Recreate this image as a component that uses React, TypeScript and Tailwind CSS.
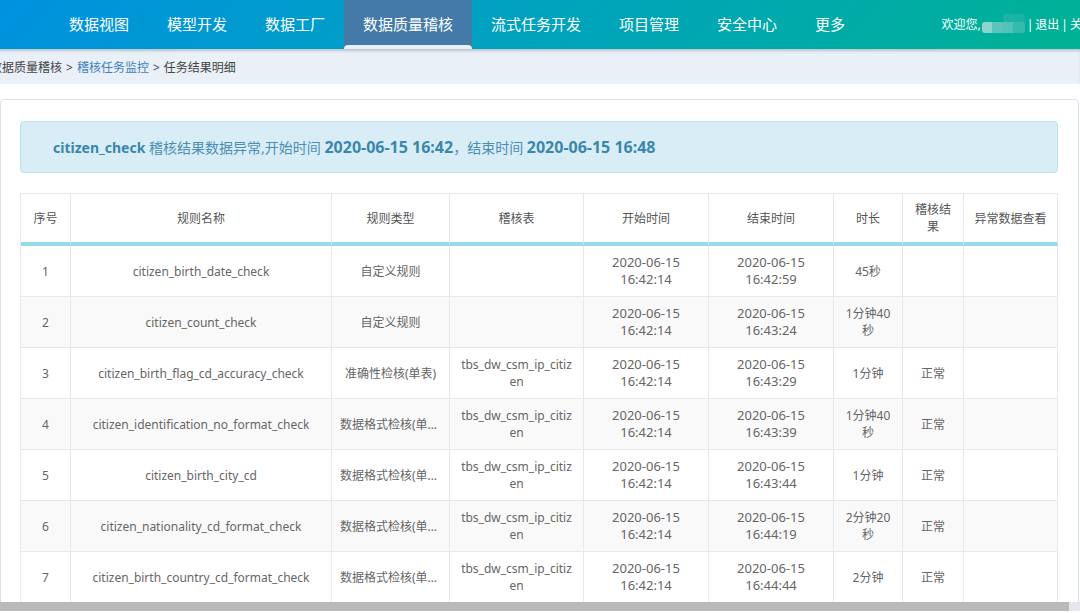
import React from 'react';
import clsx from 'clsx';

interface CheckResult {
  id: number;
  name: string;
  type: string;
  table: string;
  start: string;
  end: string;
  duration: string;
  result: string;
}

const navItems = [
  '数据视图',
  '模型开发',
  '数据工厂',
  '数据质量稽核',
  '流式任务开发',
  '项目管理',
  '安全中心',
  '更多',
];

const columns = [
  { title: '序号', width: 'w-[50px]' },
  { title: '规则名称', width: '' },
  { title: '规则类型', width: 'w-[118px]' },
  { title: '稽核表', width: 'w-[134px]' },
  { title: '开始时间', width: 'w-[125px]' },
  { title: '结束时间', width: 'w-[125px]' },
  { title: '时长', width: 'w-[69px]' },
  { title: '稽核结果', width: 'w-[61px]' },
  { title: '异常数据查看', width: 'w-[94px]' },
];

const TABLE = 'tbs_dw_csm_ip_citizen';
const START = '2020-06-15 16:42:14';

const results: CheckResult[] = [
  { id: 1, name: 'citizen_birth_date_check', type: '自定义规则', table: '', start: START, end: '2020-06-15 16:42:59', duration: '45秒', result: '' },
  { id: 2, name: 'citizen_count_check', type: '自定义规则', table: '', start: START, end: '2020-06-15 16:43:24', duration: '1分钟40秒', result: '' },
  { id: 3, name: 'citizen_birth_flag_cd_accuracy_check', type: '准确性检核(单表)', table: TABLE, start: START, end: '2020-06-15 16:43:29', duration: '1分钟', result: '正常' },
  { id: 4, name: 'citizen_identification_no_format_check', type: '数据格式检核(单表)', table: TABLE, start: START, end: '2020-06-15 16:43:39', duration: '1分钟40秒', result: '正常' },
  { id: 5, name: 'citizen_birth_city_cd', type: '数据格式检核(单表)', table: TABLE, start: START, end: '2020-06-15 16:43:44', duration: '1分钟', result: '正常' },
  { id: 6, name: 'citizen_nationality_cd_format_check', type: '数据格式检核(单表)', table: TABLE, start: START, end: '2020-06-15 16:44:19', duration: '2分钟20秒', result: '正常' },
  { id: 7, name: 'citizen_birth_country_cd_format_check', type: '数据格式检核(单表)', table: TABLE, start: START, end: '2020-06-15 16:44:44', duration: '2分钟', result: '正常' },
];

const Header: React.FC = () => (
  <header className="flex h-[49px] shrink-0 items-stretch overflow-hidden whitespace-nowrap bg-[linear-gradient(135deg,#0092e0_0%,#00a3bd_50%,#00b294_100%)] text-white">
    <nav className="flex pl-[50px]">
      {navItems.map((item) => {
        const active = item === '数据质量稽核';
        return (
          <a
            key={item}
            href="#"
            className={clsx('relative flex items-center px-[19px] text-[15px]', active && 'bg-[#437aa8]')}
          >
            {item}
            {active && <span className="absolute inset-x-0 bottom-0 h-1 rounded-t bg-[#e9f0f7]" />}
          </a>
        );
      })}
    </nav>
    <div className="-mr-3.5 ml-auto flex items-center text-xs">
      <span>欢迎您,</span>
      {/* masked user name */}
      <svg width="46" height="24" viewBox="0 0 46 24" aria-hidden="true">
        <rect x="1" y="9" width="12" height="11" rx="3" fill="#8ad6cf" />
        <rect x="11" y="9" width="11" height="11" fill="#5cc5bb" />
        <rect x="22" y="1" width="11" height="9" rx="3" fill="#1cb3a4" />
        <rect x="22" y="9" width="11" height="11" fill="#52c3b8" />
        <rect x="32" y="1" width="12" height="9" rx="3" fill="#1cb3a4" />
        <rect x="32" y="9" width="12" height="11" rx="2" fill="#35baae" />
      </svg>
      <span>|</span>
      <a href="#" className="mx-0.5">退出</a>
      <span>|</span>
      <a href="#" className="ml-0.5">关闭</a>
    </div>
  </header>
);

const Breadcrumb: React.FC = () => (
  <nav className="-ml-2.5 flex h-[35px] shrink-0 items-center gap-1 whitespace-nowrap border-b border-[#f0f3f5] bg-[#e9f0f7] pt-1 text-xs text-[#444] shadow-[inset_0_3px_3px_-1px_#b9c4cc]">
    <span>数据质量稽核</span>
    <span>&gt;</span>
    <a href="#" className="text-[#3f7fc1]">稽核任务监控</a>
    <span>&gt;</span>
    <span>任务结果明细</span>
  </nav>
);

const ResultTable: React.FC = () => {
  const cell = 'border-b border-r border-[#e6e8eb] px-2 py-2';

  return (
    <table className="w-full table-fixed border-separate border-spacing-0 border-l border-t border-[#e6e8eb] text-center text-xs leading-[17px] text-[#666]">
      <thead>
        <tr>
          {columns.map((col) => (
            <th
              key={col.title}
              className={clsx('border-b-4 border-r border-b-[#93dce9] border-r-[#e6e8eb] px-2 py-[7px] font-normal text-[#555]', col.width)}
            >
              {col.title}
            </th>
          ))}
        </tr>
      </thead>
      <tbody>
        {results.map((row) => (
          <tr key={row.id} className="h-[51px] even:bg-[#f9f9fa]">
            <td className={cell}>{row.id}</td>
            <td className={cell}>{row.name}</td>
            <td className={clsx(cell, 'truncate')} title={row.type}>{row.type}</td>
            <td className={clsx(cell, 'break-all')}>{row.table}</td>
            <td className={clsx(cell, 'text-[13px]')}>{row.start}</td>
            <td className={clsx(cell, 'text-[13px]')}>{row.end}</td>
            <td className={cell}>{row.duration}</td>
            <td className={cell}>{row.result}</td>
            <td className={cell}></td>
          </tr>
        ))}
      </tbody>
    </table>
  );
};

const App: React.FC = () => {
  return (
    <div className="flex h-screen flex-col overflow-hidden bg-white font-['Noto_Sans','Noto_Sans_CJK_SC',sans-serif]">
      <Header />
      <Breadcrumb />
      <main className="mr-px mt-[15px] min-h-0 flex-1 overflow-hidden">
        <div className="rounded-t border border-[#dcdfe5] pl-[19px] pr-5 pt-[21px]">
          <div className="mb-5 flex h-[52px] items-center rounded border border-[#bce3ef] bg-[#d9edf6] px-8 text-sm text-[#4a8fb3]">
            <p>
              <strong className="text-[#3a87ad]">citizen_check</strong> 稽核结果数据异常,开始时间{' '}
              <strong className="text-base text-[#3a87ad]">2020-06-15 16:42</strong>，结束时间{' '}
              <strong className="text-base text-[#3a87ad]">2020-06-15 16:48</strong>
            </p>
          </div>
          <ResultTable />
        </div>
      </main>
      {/* horizontal scroll bar */}
      <div className="mb-0.5 h-[9px] shrink-0 bg-[#e6e6ec] pr-[11px]">
        <div className="h-full bg-[#b9b9ba]" />
      </div>
    </div>
  );
};

export default App;
